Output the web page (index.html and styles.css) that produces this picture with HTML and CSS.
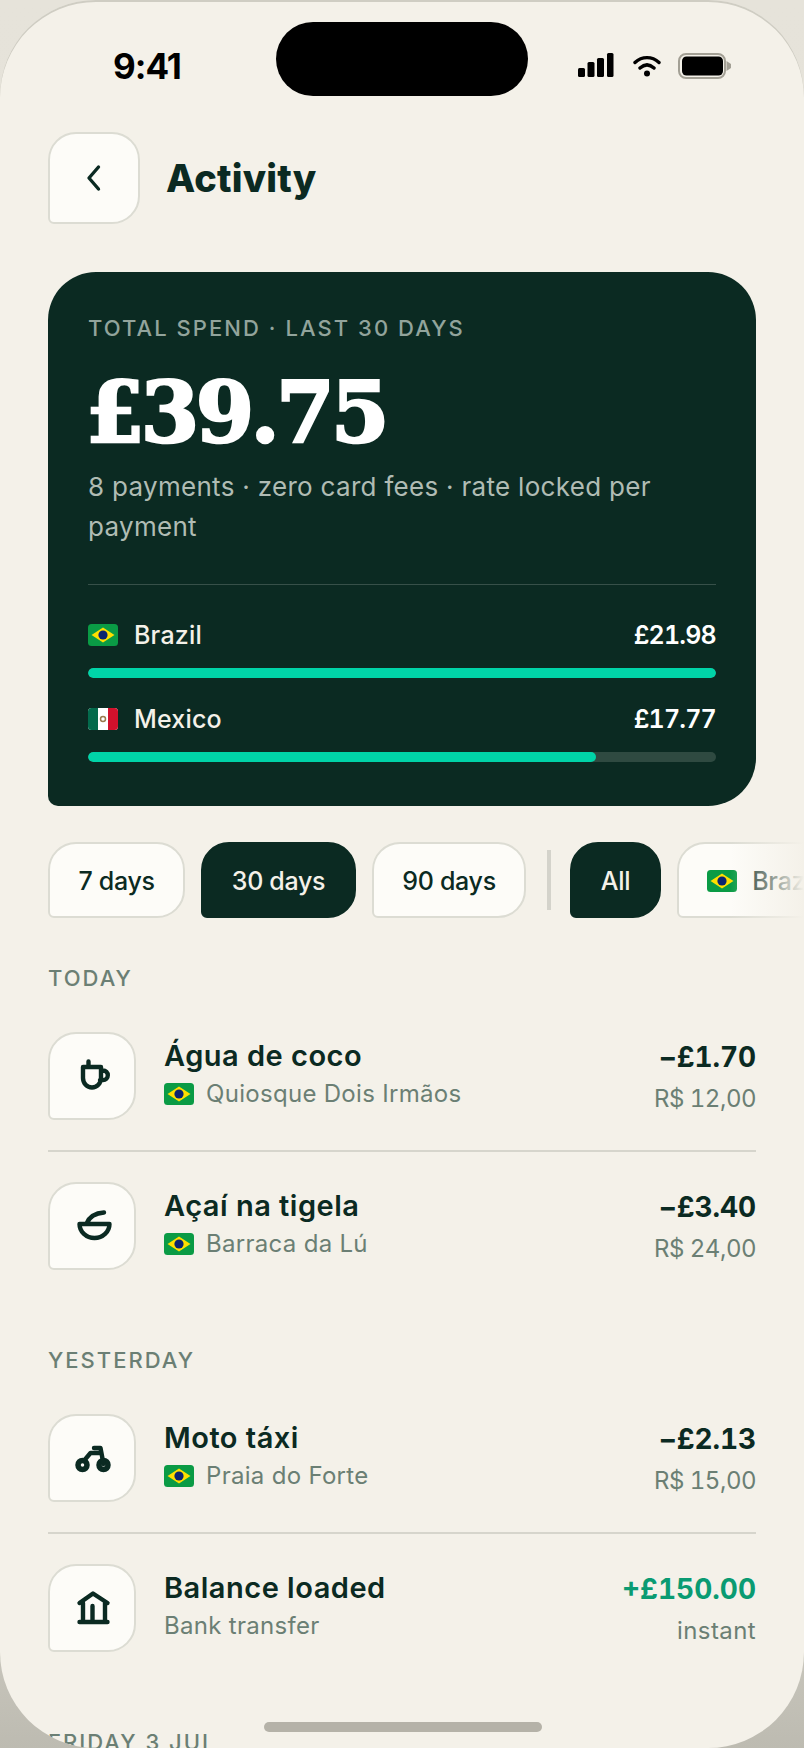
FILE: index.html
```html
<!DOCTYPE html>
<html lang="en">
<head>
<meta charset="utf-8">
<title>Activity</title>
<link rel="stylesheet" href="styles.css">
</head>
<body>
<svg class="defs" width="0" height="0" aria-hidden="true">
  <defs>
    <symbol id="flag-br" viewBox="0 0 30 22">
      <rect width="30" height="22" rx="3.5" fill="#0a9b45"/>
      <path d="M15 3.5 26.5 11 15 18.5 3.5 11z" fill="#fedf00"/>
      <circle cx="15" cy="11" r="4.6" fill="#0b2470"/>
    </symbol>
    <symbol id="flag-mx" viewBox="0 0 30 22">
      <rect width="30" height="22" rx="3.5" fill="#fff"/>
      <path d="M3.5 0H10v22H3.5A3.5 3.5 0 0 1 0 18.500V3.500A3.500 3.500 0 0 1 3.500 0z" fill="#036a4c"/>
      <path d="M20 0h6.500A3.500 3.500 0 0 1 30 3.500v15a3.500 3.500 0 0 1-3.500 3.500H20z" fill="#d2112c"/>
      <circle cx="15" cy="11" r="2.500" fill="none" stroke="#9a7a4d" stroke-width="1.500"/>
    </symbol>
  </defs>
</svg>
<main class="screen">
  <div class="status">
    <span class="time">9:41</span>
    <div class="island"></div>
    <div class="status-icons">
      <svg class="signal" width="36" height="26" viewBox="0 0 36 26"><rect x="0" y="15" width="7" height="9" rx="1.500"/><rect x="9.500" y="9" width="7" height="15" rx="1.500"/><rect x="19" y="5" width="7" height="19" rx="1.500"/><rect x="29" y="0" width="6.500" height="24" rx="1.500"/></svg>
      <svg class="wifi" width="28" height="24" viewBox="0 0 28 24"><path d="M2 8.500C9 2 19 2 26 8.500M7 14c4.500-4 9.500-4 14 0" fill="none" stroke="#000" stroke-width="3.400" stroke-linecap="round"/><circle cx="14" cy="19.500" r="3"/></svg>
      <svg class="battery" width="54" height="26" viewBox="0 0 54 26"><rect x="1" y="1" width="46" height="24" rx="7" fill="none" stroke="#a3a095" stroke-width="2"/><rect x="4" y="3.500" width="41" height="19" rx="4.500"/><path d="M48.500 8 53 11v4l-4.500 3z" fill="#a3a095"/></svg>
    </div>
  </div>

  <header class="header">
    <button class="back box" aria-label="Back">
      <svg width="20" height="30" viewBox="0 0 20 30"><path d="M14.500 4 5 15 14.500 26" fill="none" stroke="#0b2a22" stroke-width="3.400" stroke-linecap="round" stroke-linejoin="round"/></svg>
    </button>
    <h1 class="title">Activity</h1>
  </header>

  <section class="card">
    <p class="card-label">TOTAL SPEND · LAST 30 DAYS</p>
    <p class="amount">£39.75</p>
    <p class="card-sub">8 payments · zero card fees · rate locked per payment</p>
    <div class="split">
      <div class="split-row">
        <svg class="flag"><use href="#flag-br"/></svg>
        <span class="split-name">Brazil</span>
        <span class="split-val">£21.98</span>
      </div>
      <div class="bar"><div class="fill" style="width:100%"></div></div>
      <div class="split-row">
        <svg class="flag"><use href="#flag-mx"/></svg>
        <span class="split-name">Mexico</span>
        <span class="split-val">£17.77</span>
      </div>
      <div class="bar"><div class="fill" style="width:80.9%"></div></div>
    </div>
  </section>

  <nav class="chips">
    <span class="chip">7 days</span>
    <span class="chip on">30 days</span>
    <span class="chip">90 days</span>
    <span class="chip-sep"></span>
    <span class="chip on">All</span>
    <span class="chip"><svg class="flag"><use href="#flag-br"/></svg>Brazil</span>
    <div class="chips-fade"></div>
  </nav>

  <h2 class="day">TODAY</h2>
  <div class="row">
    <div class="ico box"><svg width="44" height="44" viewBox="0 0 44 44"><path d="M13 13h18v11a9 9.500 0 0 1-18 0zM18.500 7.500V13M31 16.500h2a4.800 4.800 0 0 1 0 9.600h-3" fill="none" stroke="#0b2a22" stroke-width="4.400" stroke-linecap="round" stroke-linejoin="round"/></svg></div>
    <div class="info">
      <div class="name">Água de coco</div>
      <div class="meta"><svg class="flag"><use href="#flag-br"/></svg>Quiosque Dois Irmãos</div>
    </div>
    <div class="money"><div class="val">−£1.70</div><div class="orig">R$ 12,00</div></div>
  </div>
  <div class="row">
    <div class="ico box"><svg width="44" height="44" viewBox="0 0 44 44"><path d="M9.500 20h30a15 14 0 0 1-30 0zM34 8.500C26 9 19.500 12.500 16.500 19.500" fill="none" stroke="#0b2a22" stroke-width="4.400" stroke-linecap="round" stroke-linejoin="round"/></svg></div>
    <div class="info">
      <div class="name">Açaí na tigela</div>
      <div class="meta"><svg class="flag"><use href="#flag-br"/></svg>Barraca da Lú</div>
    </div>
    <div class="money"><div class="val">−£3.40</div><div class="orig">R$ 24,00</div></div>
  </div>

  <h2 class="day later">YESTERDAY</h2>
  <div class="row">
    <div class="ico box"><svg width="44" height="44" viewBox="0 0 44 44"><circle cx="12.500" cy="29" r="4.500" fill="none" stroke="#0b2a22" stroke-width="5.500"/><circle cx="33.500" cy="29" r="4.500" fill="none" stroke="#0b2a22" stroke-width="5.500"/><path d="M15 23.500 20.500 17H30M24 12h6.500l3 16" fill="none" stroke="#0b2a22" stroke-width="4.400" stroke-linecap="round" stroke-linejoin="round"/></svg></div>
    <div class="info">
      <div class="name">Moto táxi</div>
      <div class="meta"><svg class="flag"><use href="#flag-br"/></svg>Praia do Forte</div>
    </div>
    <div class="money"><div class="val">−£2.13</div><div class="orig">R$ 15,00</div></div>
  </div>
  <div class="row">
    <div class="ico box"><svg width="44" height="44" viewBox="0 0 44 44"><path d="M9.500 17 23 7.500 37.500 17M13 17v18M35 17v18M22.500 20v14M9.500 36h28" fill="none" stroke="#0b2a22" stroke-width="4.400" stroke-linecap="round" stroke-linejoin="round"/></svg></div>
    <div class="info">
      <div class="name">Balance loaded</div>
      <div class="meta">Bank transfer</div>
    </div>
    <div class="money"><div class="val plus">+£150.00</div><div class="orig word">instant</div></div>
  </div>

  <h2 class="day later">FRIDAY 3 JUL</h2>
  <div class="home"></div>
</main>
</body>
</html>
```
FILE: styles.css
```css
* { box-sizing: border-box; }
html, body { margin: 0; padding: 0; }
body {
  width: 804px;
  height: 1748px;
  overflow: hidden;
  background: linear-gradient(#e6e3da 0%, #e2dfd6 80%, #bdbbb1 100%);
  font-family: "Inter", "Noto Sans", sans-serif;
  color: #0b2a22;
}
.defs { position: absolute; }
p, h1, h2 { margin: 0; font-weight: inherit; }

.screen {
  position: relative;
  width: 804px;
  height: 1748px;
  overflow: hidden;
  background: #f4f1e9;
  border-radius: 96px;
  box-shadow: inset 0 2px 0 #cfcdc3;
}

.status {
  height: 132px;
  padding: 0 72px 0 113px;
  display: flex;
  align-items: center;
  justify-content: space-between;
}
.time {
  font-weight: 700;
  font-size: 35px;
  letter-spacing: -1px;
  color: #000;
}
.island {
  position: absolute;
  left: 276px;
  top: 22px;
  width: 252px;
  height: 74px;
  border-radius: 37px;
  background: #000;
}
.status-icons { display: flex; align-items: center; gap: 19px; }
.status-icons svg { display: block; }
.wifi { margin-right: -2px; }

.box {
  background: #fdfcf8;
  border: 2px solid #dcdcd3;
  display: flex;
  align-items: center;
  justify-content: center;
}

.header {
  display: flex;
  align-items: center;
  gap: 26px;
  padding: 0 48px;
}
.back {
  width: 92px;
  height: 92px;
  padding: 0;
  border-radius: 28px 28px 28px 6px;
}
.title {
  font-weight: 800;
  font-size: 38px;
  letter-spacing: 0.2px;
}

.card {
  margin: 48px 48px 0;
  padding: 42px 40px 44px;
  height: 534px;
  background: #0b2a22;
  border-radius: 48px 48px 48px 10px;
}
.card-label {
  font-size: 22px;
  line-height: 28px;
  font-weight: 500;
  letter-spacing: 2.050px;
  color: #92a49c;
}
.amount {
  margin: 29px 0 0 -2px;
  font-family: "DejaVu Serif", serif;
  font-weight: 700;
  font-size: 84px;
  line-height: 84px;
  letter-spacing: -3.600px;
  color: #fff;
  -webkit-text-stroke: 2.600px #fff;
}
.card-sub {
  margin-top: 12px;
  font-size: 26px;
  line-height: 40px;
  letter-spacing: 0.300px;
  color: #b0bcb4;
}
.split {
  margin-top: 37px;
  padding-top: 32px;
  border-top: 1px solid rgba(255, 255, 255, 0.18);
}
.split-row {
  display: flex;
  align-items: center;
  height: 36px;
}
.flag { width: 30px; height: 22px; flex: none; display: block; }
.split-name {
  margin-left: 16px;
  font-size: 25px;
  font-weight: 500;
  letter-spacing: 0.200px;
  color: #f4f1e9;
}
.split-val {
  margin-left: auto;
  font-size: 25px;
  font-weight: 600;
  font-variant-numeric: tabular-nums;
  letter-spacing: -0.800px;
  color: #fff;
}
.bar {
  height: 10px;
  margin: 15px 0 23px;
  border-radius: 5px;
  background: #2f4a41;
  overflow: hidden;
}
.fill { height: 100%; background: #00d4a8; border-radius: 5px; }

.chips {
  position: relative;
  margin-top: 36px;
  padding-left: 48px;
  height: 76px;
  display: flex;
  gap: 16px;
  align-items: stretch;
  overflow: hidden;
}
.chip {
  flex: none;
  display: flex;
  align-items: center;
  gap: 15px;
  padding: 1px 28.500px 0;
  font-size: 25px;
  font-weight: 500;
  letter-spacing: -0.300px;
  background: #fdfcf8;
  border: 2px solid #dcdcd3;
  border-radius: 28px 28px 28px 6px;
}
.chip.on { background: #0b2a22; border-color: #0b2a22; color: #f4f1e9; }
.chip-sep {
  flex: none;
  width: 4px;
  margin: 8px 3px 8px 5px;
  background: #d4d3cb;
}
.chips-fade {
  position: absolute;
  top: 0;
  right: 0;
  bottom: 0;
  width: 74px;
  background: linear-gradient(to right, rgba(244, 241, 233, 0), #f4f1e9);
}

.day {
  margin: 46px 48px 40px;
  font-size: 22px;
  line-height: 28px;
  font-weight: 500;
  letter-spacing: 2px;
  color: #6b7f74;
}
.day.later { margin-top: 46px; }

.row {
  margin: 0 48px;
  padding: 30px 0;
  display: flex;
  align-items: center;
  border-top: 2px solid #d6d5cc;
}
.day + .row { padding-top: 0; border-top: 0; }
.ico {
  width: 88px;
  height: 88px;
  flex: none;
  border-radius: 28px 28px 28px 6px;
}
.ico svg { display: block; }
.info { margin-left: 28px; flex: 1; min-width: 0; padding-bottom: 4px; }
.name { font-size: 29px; line-height: 38px; font-weight: 600; letter-spacing: 0.500px; }
.meta {
  margin-top: 2px;
  display: flex;
  align-items: center;
  gap: 12px;
  font-size: 24px;
  line-height: 34px;
  letter-spacing: 0.300px;
  color: #6b7f74;
}
.money { text-align: right; padding-top: 2px; font-variant-numeric: tabular-nums; }
.val { font-size: 28px; line-height: 38px; font-weight: 700; letter-spacing: -0.100px; }
.val.plus { color: #0a9b72; letter-spacing: 0; }
.orig { margin-top: 6px; font-size: 24px; line-height: 34px; letter-spacing: -0.500px; color: #6b7f74; }
.orig.word { letter-spacing: 0.400px; }

.home {
  position: absolute;
  left: 264px;
  top: 1722px;
  width: 278px;
  height: 10px;
  border-radius: 5px;
  background: #b5b2a8;
}
```
